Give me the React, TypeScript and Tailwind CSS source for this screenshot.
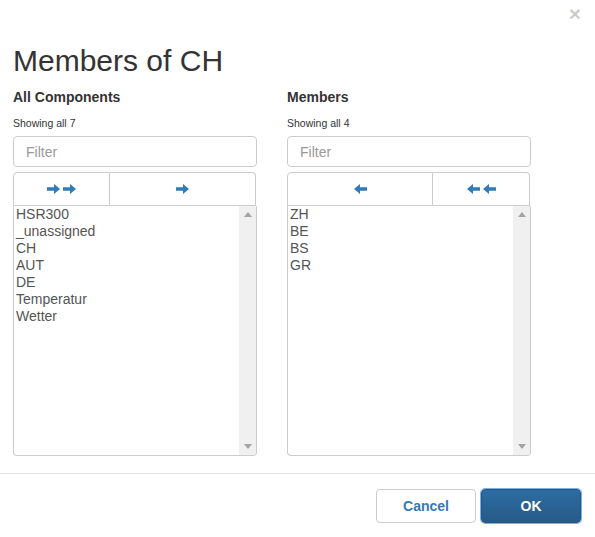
import React from "react";

function ArrowRight() {
  return (
    <svg width="13" height="10" viewBox="0 0 13 10" className="block">
      <path d="M0 3.2 H7 V0 L13 5 L7 10 V6.8 H0 Z" fill="#337ab7" />
    </svg>
  );
}
function ArrowLeft() {
  return (
    <svg width="13" height="10" viewBox="0 0 13 10" className="block">
      <path d="M13 3.2 H6 V0 L0 5 L6 10 V6.8 H13 Z" fill="#337ab7" />
    </svg>
  );
}

function ListBox({ items }: { items: string[] }) {
  return (
    <div className="flex h-[250px] rounded-b-[4px] border border-t-0 border-[#ccc] bg-white">
      <div className="flex-1 pl-[2px] text-[14px] leading-[17px] text-[#555]">
        {items.map((it) => (
          <div key={it}>{it}</div>
        ))}
      </div>
      <div className="flex w-[17px] flex-col items-center justify-between rounded-br-[3px] bg-[#f0f0f0] py-[6px]">
        <svg width="8" height="5" viewBox="0 0 8 5" className="block">
          <path d="M0 5 L4 0 L8 5 Z" fill="#a3a3a3" />
        </svg>
        <svg width="8" height="5" viewBox="0 0 8 5" className="block">
          <path d="M0 0 L4 5 L8 0 Z" fill="#a3a3a3" />
        </svg>
      </div>
    </div>
  );
}

function Column({
  title,
  count,
  items,
  side,
}: {
  title: string;
  count: number;
  items: string[];
  side: "left" | "right";
}) {
  return (
    <div className="w-[244px]">
      <div className="text-[14px] font-bold leading-[20px] text-[#333]">{title}</div>
      <div className="mt-[9px] text-[10.5px] leading-[15px] text-[#333]">Showing all {count}</div>
      <input
        placeholder="Filter"
        className="mt-[5px] block h-[31px] w-full rounded-[4px] border border-[#ccc] px-[12px] text-[14px] text-[#555] placeholder:text-[#999] outline-none"
      />
      <div className="mt-[5px] flex h-[34px] w-[243px]">
        {side === "left" ? (
          <>
            <div className="flex w-[97px] items-center justify-center gap-[3px] rounded-tl-[4px] border border-[#ccc] bg-white">
              <ArrowRight />
              <ArrowRight />
            </div>
            <div className="flex flex-1 items-center justify-center rounded-tr-[4px] border border-l-0 border-[#ccc] bg-white">
              <ArrowRight />
            </div>
          </>
        ) : (
          <>
            <div className="flex w-[146px] items-center justify-center rounded-tl-[4px] border border-[#ccc] bg-white">
              <ArrowLeft />
            </div>
            <div className="flex flex-1 items-center justify-center gap-[3px] rounded-tr-[4px] border border-l-0 border-[#ccc] bg-white">
              <ArrowLeft />
              <ArrowLeft />
            </div>
          </>
        )}
      </div>
      <ListBox items={items} />
    </div>
  );
}

export default function App() {
  return (
    <div
      className="relative h-[537px] w-[595px] overflow-hidden bg-white"
      style={{ fontFamily: '"Liberation Sans", Arial, sans-serif' }}
    >
      <div className="absolute right-[14px] top-[3px] text-[21px] font-bold leading-[21px] text-black opacity-20">
        ×
      </div>
      <div className="px-[13px]">
        <h3 className="mt-[44px] text-[30px] font-normal leading-[33px] text-[#333]">Members of CH</h3>
        <div className="mt-[10px] flex gap-[30px]">
          <Column
            title="All Components"
            count={7}
            side="left"
            items={["HSR300", "_unassigned", "CH", "AUT", "DE", "Temperatur", "Wetter"]}
          />
          <Column title="Members" count={4} side="right" items={["ZH", "BE", "BS", "GR"]} />
        </div>
      </div>
      <div className="mt-[17px] flex justify-end gap-[5px] border-t border-[#e5e5e5] px-[14px] pt-[15px]">
        <button className="h-[34px] w-[100px] rounded-[4px] border border-[#ccc] bg-white text-[14px] font-bold text-[#337ab7]">
          Cancel
        </button>
        <button className="h-[34px] w-[100px] rounded-[4px] border border-[#245580] bg-gradient-to-b from-[#2d6ca2] to-[#265a88] text-[14px] font-bold text-white shadow-[0_0_0_1px_#7fb1e4]">
          OK
        </button>
      </div>
    </div>
  );
}
